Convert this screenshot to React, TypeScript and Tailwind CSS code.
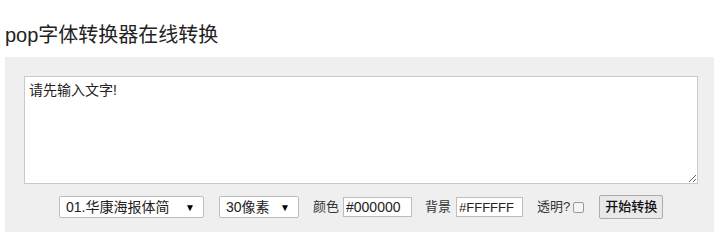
import React from 'react';

const font = { fontFamily: '"Liberation Sans", "Noto Sans CJK SC", sans-serif' };

const FakeSelect: React.FC<{ label: string; className: string }> = ({ label, className }) => {
  return (
    <div
      className={`flex items-center justify-between h-[22px] border border-[#bdbdbd] bg-white pl-[6px] pr-[8px] text-[14px] text-[#222] rounded-[2px] ${className}`}
    >
      <span>{label}</span>
      <span className="text-[10px] text-black">▼</span>
    </div>
  );
};

export default function App() {
  return (
    <div className="w-[720px] h-[238px] bg-white overflow-hidden" style={font}>
      <h1 className="pl-[5px] pt-[24px] text-[20px] leading-[23px] text-[#222] font-normal">pop字体转换器在线转换</h1>

      <div className="mt-[10px] ml-[5px] w-[709px] h-[175px] bg-[#efefef] pt-[19px] pl-[19px]">
        <textarea
          className="block w-[674px] h-[108px] border border-[#c9c9c9] bg-white px-[4px] py-[5px] text-[14px] leading-[17px] text-[#222] outline-none"
          defaultValue="请先输入文字!"
          style={font}
        />

        <div className="flex items-center mt-[11px] pl-[35px] text-[13px] text-[#333]">
          <FakeSelect label="01.华康海报体简" className="w-[145px]" />
          <FakeSelect label="30像素" className="w-[80px] ml-[15px]" />

          <span className="ml-[14px]">颜色</span>
          <input
            className="ml-[4px] w-[69px] h-[20px] border border-[#bdbdbd] bg-white px-[2px] text-[14px] text-[#222] outline-none"
            defaultValue="#000000"
            style={font}
          />

          <span className="ml-[13px]">背景</span>
          <input
            className="ml-[5px] w-[67px] h-[20px] border border-[#bdbdbd] bg-white px-[2px] text-[13px] text-[#222] outline-none"
            defaultValue="#FFFFFF"
            style={font}
          />

          <span className="ml-[14px]">透明?</span>
          <span className="ml-[3px] inline-block w-[11px] h-[11px] border border-[#9a9a9a] bg-[#f4f4f4] rounded-[2px]" />

          <button
            className="ml-[15px] h-[24px] px-[5px] border border-[#adadad] bg-[#e9e9e9] rounded-[2px] text-[13px] text-[#111] font-medium"
            style={font}
          >
            开始转换
          </button>
        </div>
      </div>
    </div>
  );
}
